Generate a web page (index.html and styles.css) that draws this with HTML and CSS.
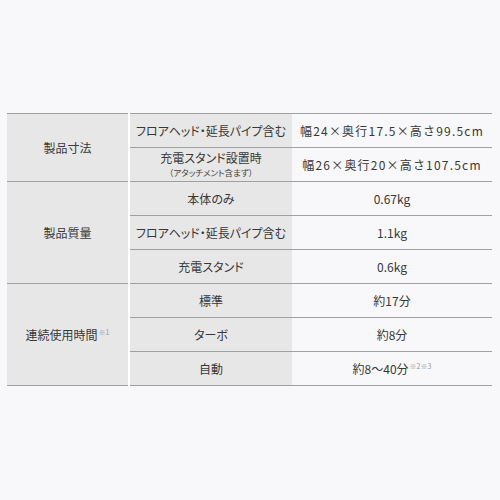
FILE: index.html
```html
<!DOCTYPE html>
<html lang="ja">
<head>
<meta charset="utf-8">
<link rel="stylesheet" href="styles.css">
</head>
<body>
<table class="spec">
  <tr>
    <th class="group" rowspan="2">製品寸法</th>
    <td class="label">フロアヘッド・延長パイプ含む</td>
    <td class="value dim">幅24×奥行17.5×高さ99.5cm</td>
  </tr>
  <tr class="end">
    <td class="label">充電スタンド設置時<span class="note">（アタッチメント含まず）</span></td>
    <td class="value dim">幅26×奥行20×高さ107.5cm</td>
  </tr>
  <tr>
    <th class="group" rowspan="3">製品質量</th>
    <td class="label">本体のみ</td>
    <td class="value">0.67kg</td>
  </tr>
  <tr>
    <td class="label">フロアヘッド・延長パイプ含む</td>
    <td class="value">1.1kg</td>
  </tr>
  <tr class="end">
    <td class="label">充電スタンド</td>
    <td class="value">0.6kg</td>
  </tr>
  <tr>
    <th class="group" rowspan="3">連続使用時間<sup>※1</sup></th>
    <td class="label">標準</td>
    <td class="value">約17分</td>
  </tr>
  <tr>
    <td class="label">ターボ</td>
    <td class="value">約8分</td>
  </tr>
  <tr class="end">
    <td class="label">自動</td>
    <td class="value">約8〜40分<sup>※2※3</sup></td>
  </tr>
</table>
</body>
</html>
```
FILE: styles.css
```css
html, body {
  margin: 0;
  padding: 0;
  background: #f8f7f9;
}
body {
  width: 500px;
  height: 500px;
  font-family: "Noto Sans CJK JP", "Noto Sans", sans-serif;
  color: #383838;
  font-size: 12px;
}
.spec {
  border-collapse: collapse;
  margin: 113px 0 0 7px;
  width: 485px;
  table-layout: fixed;
  border-top: 1px solid #a0a0a0;
}
.spec th, .spec td {
  padding: 0;
  height: 33px;
  text-align: center;
  vertical-align: middle;
  border-bottom: 1px solid #a0a0a0;
  line-height: 14px;
}
.group {
  width: 121px;
  background: #e7e7e7;
  font-weight: normal;
  border-right: 2px solid #ffffff;
}
.label {
  width: 162px;
  background: #e7e7e7;
  font-feature-settings: "palt";
}
.value {
  background: #f8f7f9;
}
.dim {
  letter-spacing: 1.2px;
}
.note {
  display: block;
  font-size: 8.5px;
  line-height: 13px;
  color: #444;
  margin-top: 1px;
}
sup {
  font-size: 7px;
  color: #999;
  vertical-align: 5px;
  line-height: 0;
  margin-left: 1px;
}
```
